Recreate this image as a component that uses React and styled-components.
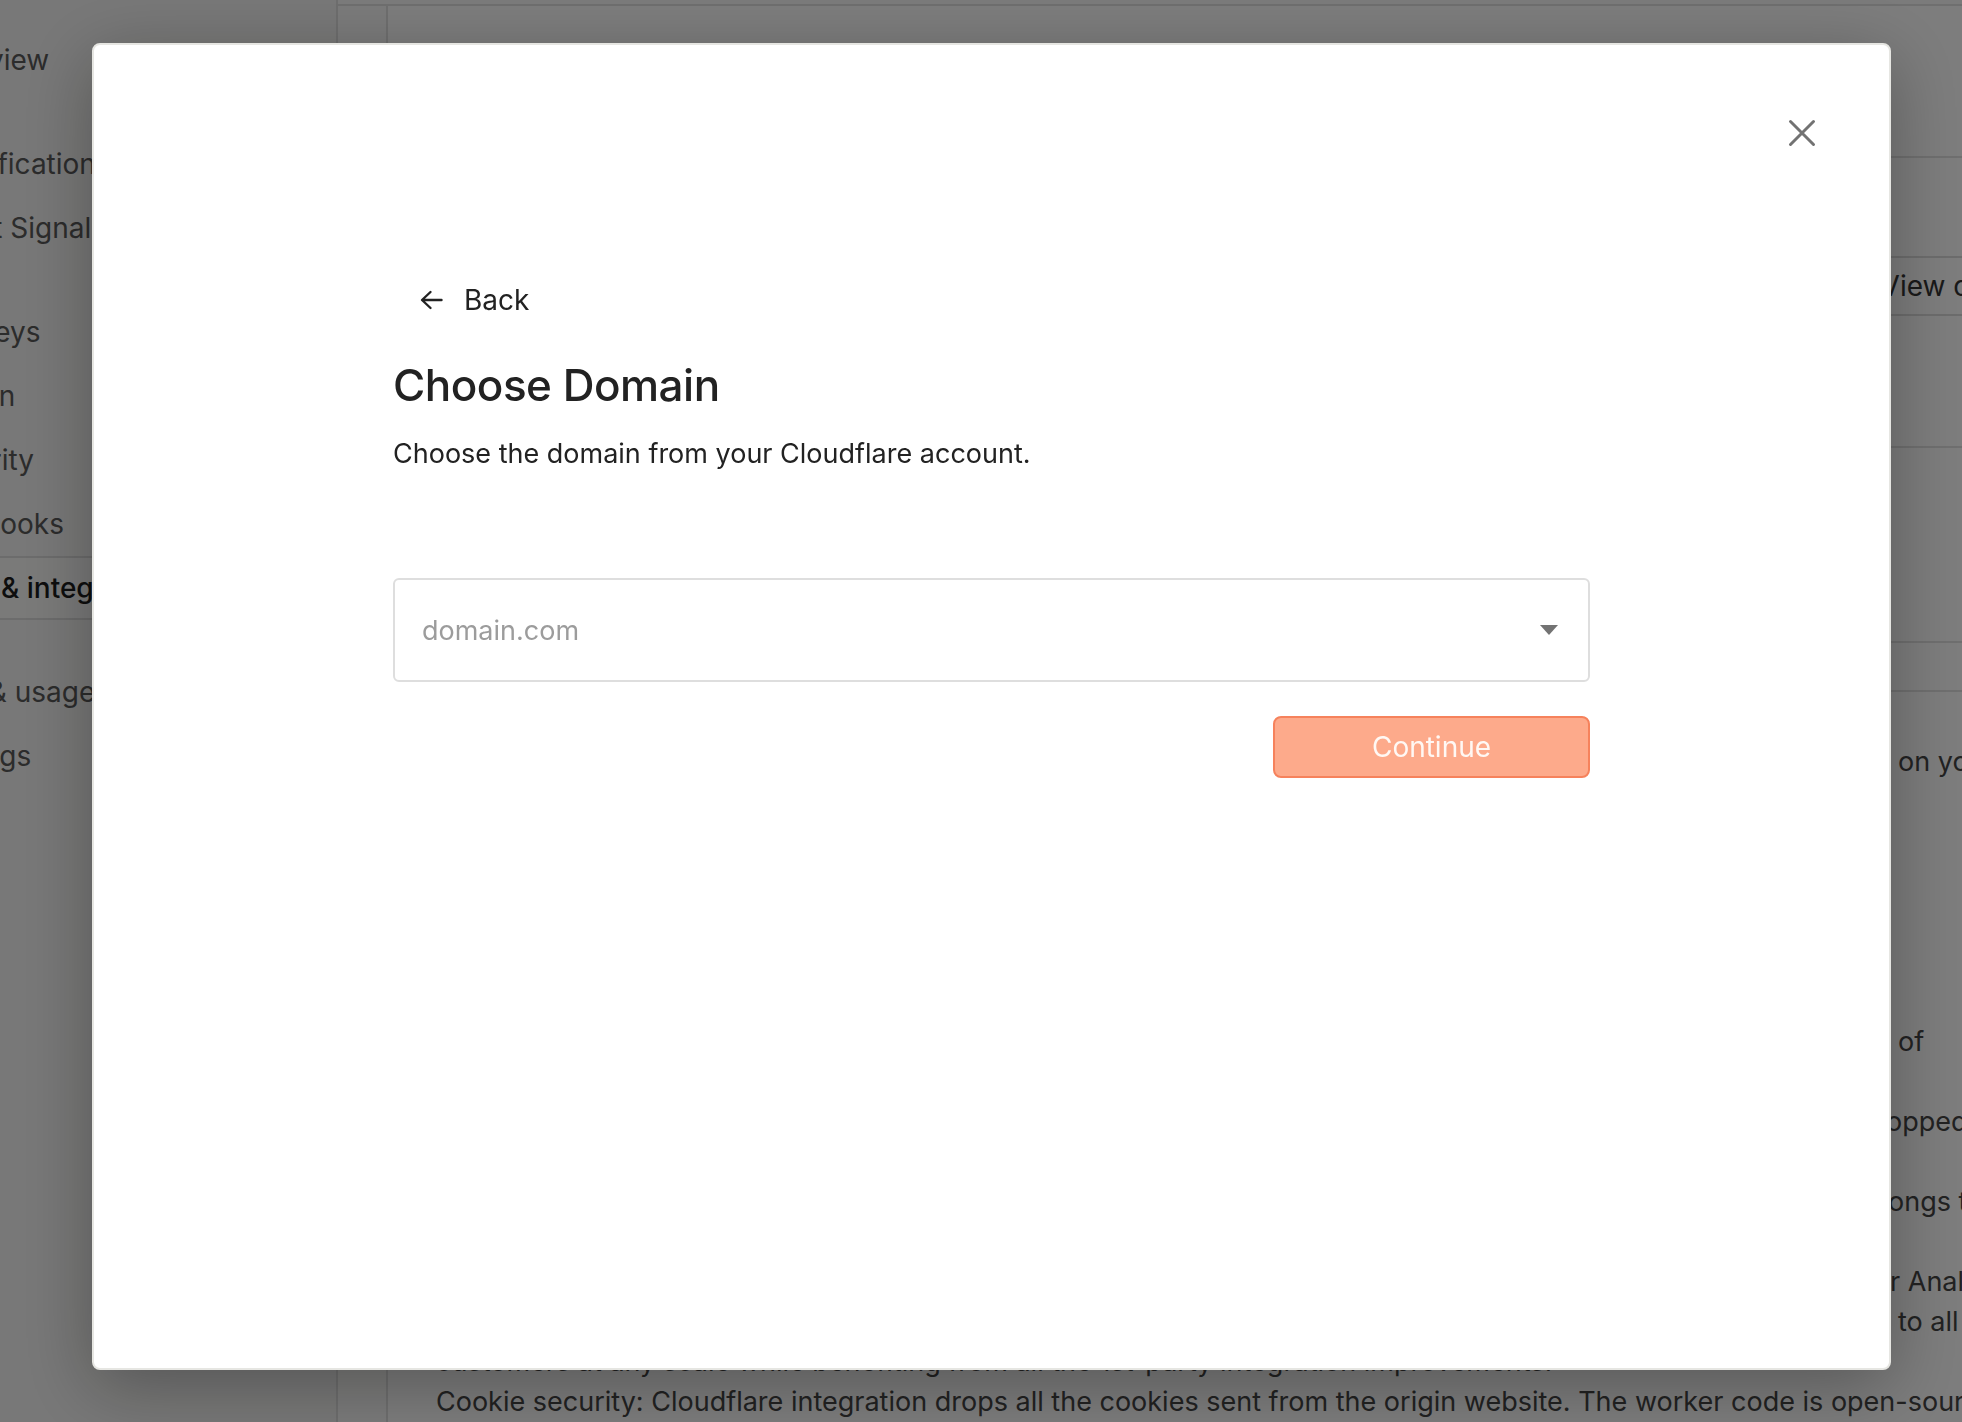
import React from "react";
import styled, { createGlobalStyle } from "styled-components";

const GlobalStyle = createGlobalStyle`
  html, body {
    margin: 0;
    padding: 0;
  }
  body {
    font-family: Inter, "Noto Sans", "Liberation Sans", sans-serif;
    color: #222;
    overflow: hidden;
  }
  * {
    box-sizing: border-box;
  }
`;

const Page = styled.div`
  display: grid;
  grid-template-columns: 338px 1fr;
  height: 100vh;
  overflow: hidden;
  background: #f7f7f6;
`;

const Sidebar = styled.nav`
  background: #f1f1f0;
  border-right: 2px solid #dcdcdc;
  padding-top: 28px;
  overflow: hidden;
`;

const NavGroup = styled.div`
  margin-bottom: 40px;
`;

const NavItem = styled.div`
  height: 64px;
  display: flex;
  align-items: center;
  margin-left: -76px;
  font-size: 28px;
  white-space: nowrap;
  color: ${(p) => (p.$active ? "#1c1c1c" : "#585858")};
  font-weight: ${(p) => (p.$active ? 500 : 400)};
  border-top: 2px solid ${(p) => (p.$active ? "#d8d8d8" : "transparent")};
  border-bottom: 2px solid ${(p) => (p.$active ? "#d8d8d8" : "transparent")};
  background: ${(p) => (p.$active ? "#f4f4f3" : "transparent")};
`;

const Main = styled.main`
  display: flex;
  flex-direction: column;
  overflow: hidden;
`;

const TopBar = styled.div`
  flex-shrink: 0;
  height: 6px;
  border-bottom: 2px solid #dedede;
`;

const Card = styled.section`
  flex: 1 0 auto;
  margin-left: 48px;
  border-left: 2px solid #dedede;
  background: #fafafa;
`;

const CardBlock = styled.div`
  height: ${(p) => p.$h}px;
  border-bottom: 2px solid #dedede;
  display: flex;
  align-items: flex-start;
  justify-content: flex-end;
  padding-top: ${(p) => p.$pt || 0}px;
`;

const GhostButton = styled.div`
  height: 60px;
  margin-right: -80px;
  padding: 0 24px;
  display: flex;
  align-items: center;
  font-size: 28px;
  color: #333;
  border-top: 2px solid #d9d9d9;
  border-bottom: 2px solid #d9d9d9;
  white-space: nowrap;
`;

const Prose = styled.div`
  padding: 50px 0 0 48px;
  font-size: 27px;
  line-height: 40px;
  color: #444;
`;

const Para = styled.div`
  margin-bottom: 40px;
`;

const Line = styled.div`
  display: flex;
  white-space: nowrap;
`;

const Lead = styled.span`
  width: 1462px;
  flex-shrink: 0;
  overflow: hidden;
`;

const Tail = styled.span`
  margin-left: ${(p) => p.$shift || 0}px;
`;

const Overlay = styled.div`
  position: fixed;
  inset: 0;
  background: rgba(0, 0, 0, 0.5);
  padding: 43px 0 0 92px;
`;

const Modal = styled.div`
  position: relative;
  width: 1799px;
  height: 1327px;
  background: #fff;
  border: 2px solid #e6e6e2;
  border-radius: 8px;
  box-shadow: 0 16px 70px rgba(0, 0, 0, 0.3);
`;

const CloseButton = styled.button`
  position: absolute;
  top: 74px;
  right: 73px;
  width: 28px;
  height: 28px;
  padding: 0;
  border: none;
  background: none;
  cursor: pointer;
  display: flex;
`;

const Content = styled.div`
  width: 1197px;
  margin: 0 auto;
  padding-top: 237px;
  display: flex;
  flex-direction: column;
`;

const BackButton = styled.button`
  align-self: flex-start;
  display: flex;
  align-items: center;
  gap: 21px;
  height: 36px;
  padding: 0 0 0 27px;
  border: none;
  background: none;
  font-family: inherit;
  font-size: 28px;
  color: #222;
  cursor: pointer;
`;

const Title = styled.h2`
  margin: 41px 0 0;
  font-size: 44px;
  line-height: 53px;
  font-weight: 500;
  letter-spacing: -0.5px;
  color: #222;
`;

const Subtitle = styled.p`
  margin: 24px 0 0;
  font-size: 27px;
  line-height: 36px;
  color: #222;
`;

const Select = styled.div`
  margin-top: 106px;
  height: 104px;
  border: 2px solid #dedede;
  border-radius: 6px;
  display: flex;
  align-items: center;
  justify-content: space-between;
  padding: 0 30px 0 27px;
  cursor: pointer;
`;

const Placeholder = styled.span`
  font-size: 27px;
  color: #9c9c9c;
`;

const Caret = styled.span`
  width: 0;
  height: 0;
  border-left: 9.5px solid transparent;
  border-right: 9.5px solid transparent;
  border-top: 10px solid #737373;
`;

const Actions = styled.div`
  margin-top: 34px;
  display: flex;
  justify-content: flex-end;
`;

const PrimaryButton = styled.button`
  width: 317px;
  height: 62px;
  background: #fdaa8b;
  border: 2px solid #f6825c;
  border-radius: 8px;
  font-family: inherit;
  font-size: 28px;
  color: #fff8f4;
  cursor: not-allowed;
`;

const navGroups = [
  [{ label: "Overview" }],
  [{ label: "Identification" }, { label: "Smart Signals" }],
  [
    { label: "API Keys" },
    { label: "Region" },
    { label: "Security" },
    { label: "Webhooks" },
    { label: "Apps & integrations", active: true },
  ],
  [{ label: "Plan & usage" }, { label: "Settings" }],
];

// each line: [text under the modal, visible tail, tail shift]
const proseParas = [
  [
    ["Cloudflare integration lets you serve the Fingerprint agent and proxy identification requests through your domain", "on your website.", 0],
    ["It is the recommended way to run Fingerprint Pro in production."],
  ],
  [
    ["Improved accuracy: requests are sent from your domain, so browsers treat them as first-party requests."],
    ["Fewer blocked requests: ad blockers and privacy extensions will not interfere with identification."],
    ["Cookie lifetime: first-party cookies set by the integration are not limited by Safari ITP."],
    ["Setup takes only a few minutes and requires a Cloudflare account."],
    ["The account needs permission to create workers and routes for the zone that serves your website, ahead", "of", 0],
  ],
  [
    ["Performance: the worker runs at the edge close to your visitors, so identification latency is greatly dr", "opped", -12],
  ],
  [
    ["Ownership: the integration is deployed to your own Cloudflare account and the worker code therefore bel", "ongs to you", -10],
  ],
  [
    ["Pricing: Cloudflare Workers free plan covers most use cases, and Fingerprint Pro does not charge fo", "r Analytics", -8],
    ["Availability: the Cloudflare integration is included in every Fingerprint Pro plan and is available", "to all", 0],
    ["customers at any scale while benefiting from all the 1st-party integration improvements."],
    ["Cookie security: Cloudflare integration drops all the cookies sent from the origin website. The worker code is open-source and available on GitHub."],
  ],
];

const ArrowLeft = () => (
  <svg width="23" height="20" viewBox="0 0 23 20" fill="none">
    <path
      d="M21.5 10H2.5M10.5 2L2 10l8.5 8"
      stroke="#222"
      strokeWidth="2.4"
      strokeLinecap="round"
      strokeLinejoin="round"
    />
  </svg>
);

const CloseIcon = () => (
  <svg width="28" height="28" viewBox="0 0 28 28" fill="none">
    <path
      d="M2.5 2.5l23 23M25.5 2.5l-23 23"
      stroke="#727272"
      strokeWidth="3"
      strokeLinecap="round"
    />
  </svg>
);

export default function App() {
  return (
    <>
      <GlobalStyle />
      <Page>
        <Sidebar>
          {navGroups.map((group, gi) => (
            <NavGroup key={gi}>
              {group.map((item) => (
                <NavItem key={item.label} $active={item.active}>
                  {item.label}
                </NavItem>
              ))}
            </NavGroup>
          ))}
        </Sidebar>
        <Main>
          <TopBar />
          <Card>
            <CardBlock $h={152} />
            <CardBlock $h={290} $pt={98}>
              <GhostButton>View docs</GhostButton>
            </CardBlock>
            <CardBlock $h={195} />
            <CardBlock $h={49} />
            <Prose>
              {proseParas.map((para, pi) => (
                <Para key={pi}>
                  {para.map(([lead, tail, shift], li) =>
                    tail ? (
                      <Line key={li}>
                        <Lead>{lead}</Lead>
                        <Tail $shift={shift}>{tail}</Tail>
                      </Line>
                    ) : (
                      <Line key={li}>{lead}</Line>
                    )
                  )}
                </Para>
              ))}
            </Prose>
          </Card>
        </Main>
      </Page>
      <Overlay>
        <Modal role="dialog" aria-modal="true">
          <CloseButton aria-label="Close">
            <CloseIcon />
          </CloseButton>
          <Content>
            <BackButton>
              <ArrowLeft />
              Back
            </BackButton>
            <Title>Choose Domain</Title>
            <Subtitle>Choose the domain from your Cloudflare account.</Subtitle>
            <Select>
              <Placeholder>domain.com</Placeholder>
              <Caret />
            </Select>
            <Actions>
              <PrimaryButton disabled>Continue</PrimaryButton>
            </Actions>
          </Content>
        </Modal>
      </Overlay>
    </>
  );
}
